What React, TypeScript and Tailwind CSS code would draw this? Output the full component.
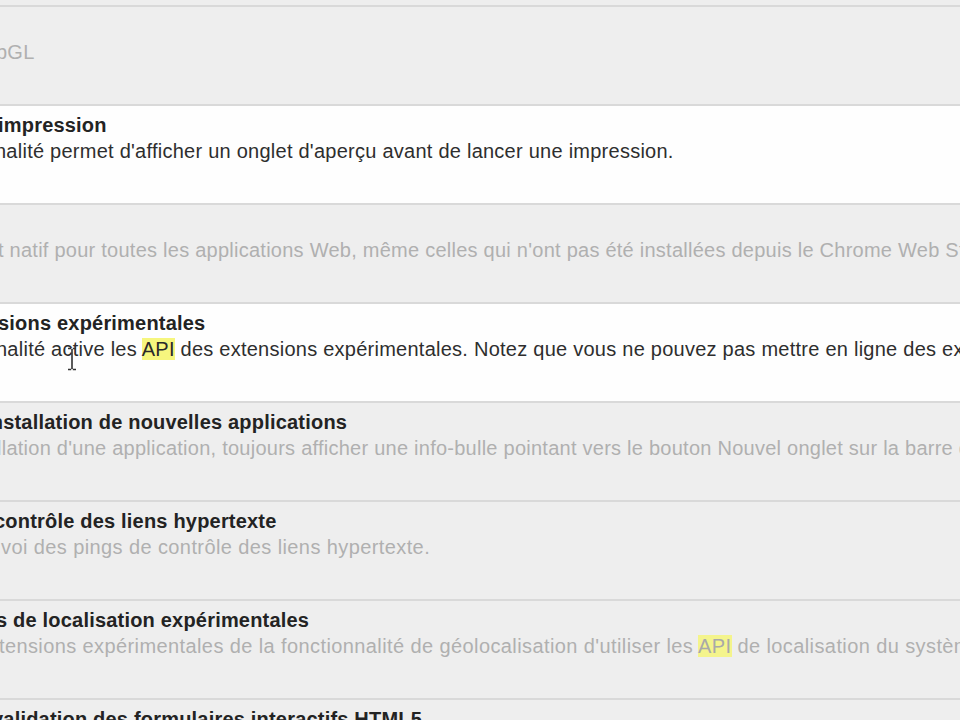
import React from "react";

type Row = {
  title?: string;
  titleCls?: string;
  desc: React.ReactNode;
  descCls?: string;
  enabled: boolean;
  cursor?: boolean;
};

const Api = ({ dim }: { dim?: boolean }) => (
  <span className={dim ? "bg-[#f4f48c] text-[#a9a9a9]" : "bg-[#f6f67e] text-[#2a2a2a]"}>API</span>
);

const rows: Row[] = [
  { desc: "bGL", descCls: "-ml-[4px] tracking-[0.25px]", enabled: false },
  {
    title: "impression",
    titleCls: "-ml-[2px]",
    desc: "nalité permet d'afficher un onglet d'aperçu avant de lancer une impression.",
    descCls: "-ml-[5px] tracking-[0.25px]",
    enabled: true,
  },
  {
    desc: "t natif pour toutes les applications Web, même celles qui n'ont pas été installées depuis le Chrome Web Store.",
    descCls: "-ml-[2px] tracking-[0.25px]",
    enabled: false,
  },
  {
    title: "sions expérimentales",
    titleCls: "-ml-[2px]",
    desc: (
      <>
        nalité active les <Api /> des extensions expérimentales. Notez que vous ne pouvez pas mettre en ligne des extensions
      </>
    ),
    descCls: "-ml-[4px] tracking-[0.25px]",
    enabled: true,
    cursor: true,
  },
  {
    title: "installation de nouvelles applications",
    titleCls: "-ml-[15px]",
    desc: "llation d'une application, toujours afficher une info-bulle pointant vers le bouton Nouvel onglet sur la barre d'onglets.",
    descCls: "-ml-[3px] tracking-[0.25px]",
    enabled: false,
  },
  {
    title: "contrôle des liens hypertexte",
    titleCls: "-ml-[6px]",
    desc: "envoi des pings de contrôle des liens hypertexte.",
    descCls: "-ml-[22px] tracking-[0.4px]",
    enabled: false,
  },
  {
    title: "s de localisation expérimentales",
    titleCls: "-ml-[4px]",
    desc: (
      <>
        extensions expérimentales de la fonctionnalité de géolocalisation d'utiliser les <Api dim /> de localisation du système
      </>
    ),
    descCls: "-ml-[23px] tracking-[0.4px]",
    enabled: false,
  },
  {
    title: "validation des formulaires interactifs HTML5",
    titleCls: "-ml-[8px]",
    desc: "",
    enabled: false,
  },
];

export default function App() {
  return (
    <div
      className="w-[960px] h-[720px] overflow-hidden bg-[#eeeeee] pt-[5px]"
      style={{ fontFamily: '"Liberation Sans", Arial, sans-serif' }}
    >
      {rows.map((r, i) => (
        <div
          key={i}
          className={
            "relative h-[99px] border-t-2 border-[#d9d9d9] pt-[7px] overflow-hidden " +
            (r.enabled ? "bg-[#fefefe]" : "bg-[#eeeeee]")
          }
        >
          <div
            className={
              "h-[25px] leading-[25px] text-[20px] tracking-[0.2px] font-bold text-[#232323] whitespace-nowrap " +
              (r.titleCls ?? "")
            }
          >
            {r.title ?? ""}
          </div>
          <div
            className={
              "h-[26px] leading-[26px] text-[20px] whitespace-nowrap " +
              (r.descCls ?? "") +
              " " +
              (r.enabled ? "text-[#2e2e2e]" : "text-[#b0b0b0]")
            }
          >
            {r.desc}
          </div>
          {r.cursor && (
            <svg
              className="absolute left-[66px] top-[43px]"
              width="12"
              height="24"
              viewBox="0 0 12 24"
              fill="none"
              stroke="#333"
              strokeWidth="1.6"
            >
              <path d="M2 1.5h3.2M6.8 1.5H10M6 2v20M2 22.5h3.2M6.8 22.5H10" />
            </svg>
          )}
        </div>
      ))}
    </div>
  );
}
